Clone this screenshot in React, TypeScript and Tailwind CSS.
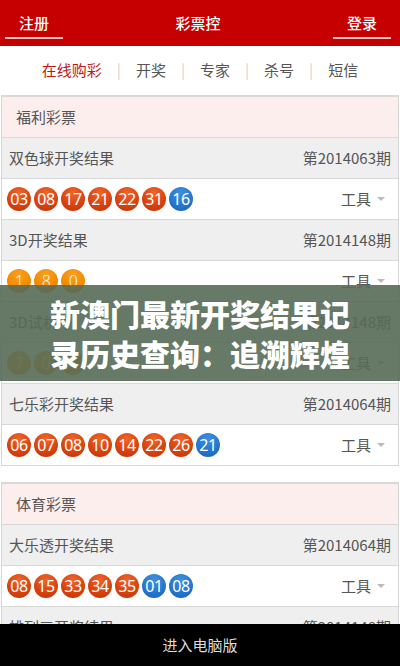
const cjk = { fontFamily: '"Noto Sans CJK SC", "Noto Sans", sans-serif' }

type Ball = { n: string; c: 'red' | 'blue' | 'orange' }

interface Draw {
  name: string
  issue: string
  balls: Ball[]
}

const red = (list: string[]): Ball[] => list.map(n => ({ n, c: 'red' as const }))
const blue = (list: string[]): Ball[] => list.map(n => ({ n, c: 'blue' as const }))
const orange = (list: string[]): Ball[] => list.map(n => ({ n, c: 'orange' as const }))

const sections: { title: string; draws: Draw[] }[] = [
  {
    title: '福利彩票',
    draws: [
      { name: '双色球开奖结果', issue: '第2014063期', balls: [...red(['03', '08', '17', '21', '22', '31']), ...blue(['16'])] },
      { name: '3D开奖结果', issue: '第2014148期', balls: orange(['1', '8', '0']) },
      { name: '3D试机号', issue: '第2014148期', balls: orange(['7', '0', '4']) },
      { name: '七乐彩开奖结果', issue: '第2014064期', balls: [...red(['06', '07', '08', '10', '14', '22', '26']), ...blue(['21'])] },
    ],
  },
  {
    title: '体育彩票',
    draws: [
      { name: '大乐透开奖结果', issue: '第2014064期', balls: [...red(['08', '15', '33', '34', '35']), ...blue(['01', '08'])] },
      { name: '排列三开奖结果', issue: '第2014148期', balls: orange(['3', '5', '2']) },
    ],
  },
]

const ballStyles = {
  red: 'bg-[radial-gradient(circle_at_50%_25%,#f0642a_0%,#d6420e_60%,#bc320a_100%)] text-white',
  blue: 'bg-[radial-gradient(circle_at_50%_25%,#3d8fe0_0%,#2475cc_60%,#1a62b0_100%)] text-white',
  orange: 'bg-[radial-gradient(circle_at_50%_25%,#f9a020_0%,#f08a00_60%,#e07800_100%)] text-[#fff3e0] font-light',
}

function LotteryBall({ ball }: { ball: Ball }) {
  return (
    <span
      className={`flex h-[24px] w-[24px] items-center justify-center rounded-full text-[16px] leading-none tracking-[-0.5px] ${ballStyles[ball.c]}`}
      style={{ fontFamily: '"Noto Sans", "Open Sans", sans-serif' }}
    >
      {ball.n}
    </span>
  )
}

function DrawRows({ draw }: { draw: Draw }) {
  return (
    <>
      <div className="flex h-[41px] items-center justify-between border-t border-[#d8d8d8] bg-[#efefef] px-[7px] text-[15px] text-[#555]">
        <span>{draw.name}</span>
        <span>{draw.issue}</span>
      </div>
      <div className="flex h-[41px] items-center justify-between border-t border-[#d8d8d8] bg-white pl-[5px] pr-[13px]">
        <div className="flex gap-[3px]">
          {draw.balls.map((b, i) => (
            <LotteryBall key={i} ball={b} />
          ))}
        </div>
        <div className="flex items-center gap-[6px] text-[15px] text-[#555]">
          <span>工具</span>
          <span className="h-0 w-0 border-x-[4px] border-t-[4px] border-x-transparent border-t-[#bbb]"></span>
        </div>
      </div>
    </>
  )
}

export default function App() {
  const navItems = ['在线购彩', '开奖', '专家', '杀号', '短信']

  return (
    <div className="relative h-[666px] w-[400px] overflow-hidden bg-white" style={cjk}>
      {/* Header */}
      <div className="flex h-[46px] items-start justify-between bg-[#c60000] text-[15px] text-white">
        <div className="flex w-[58px] ml-[5px] flex-col items-center pt-[12px]">
          <span className="font-medium leading-[22px]">注册</span>
          <span className="mt-[3px] h-[2px] w-full bg-[#f6c6c6]"></span>
        </div>
        <span className="pt-[12px] font-medium leading-[22px]">彩票控</span>
        <div className="flex w-[58px] mr-[9px] flex-col items-center pt-[12px]">
          <span className="font-medium leading-[22px]">登录</span>
          <span className="mt-[3px] h-[2px] w-full bg-[#f6c6c6]"></span>
        </div>
      </div>

      {/* Nav */}
      <div className="flex h-[49px] items-center justify-center text-[15px] text-[#555]">
        {navItems.map((item, i) => (
          <div key={item} className="flex items-center">
            {i > 0 && <span className="mx-[15px] text-[#d0d0d0]">|</span>}
            <span className={i === 0 ? 'text-[#c01818]' : ''}>{item}</span>
          </div>
        ))}
      </div>

      {/* Sections */}
      <div className="flex flex-col gap-[16px]">
        {sections.map(s => (
          <div key={s.title} className="mx-[1px] border border-t-[2px] border-[#d8d8d8]">
            <div className="flex h-[40px] items-center bg-[#fdeeee] px-[14px] text-[15px] text-[#555]">
              {s.title}
            </div>
            {s.draws.map(d => (
              <DrawRows key={d.name} draw={d} />
            ))}
          </div>
        ))}
      </div>

      {/* Overlay banner */}
      <div className="absolute left-0 top-[285px] flex h-[96px] w-full flex-col items-center justify-center bg-[#576b57]/90 text-[30px] font-black leading-[40px] text-white">
        <span>新澳门最新开奖结果记</span>
        <span>录历史查询：追溯辉煌</span>
      </div>

      {/* Footer */}
      <div className="absolute bottom-0 left-0 flex h-[42px] w-full items-center justify-center bg-black text-[15px] text-[#ddd]">
        进入电脑版
      </div>
    </div>
  )
}
